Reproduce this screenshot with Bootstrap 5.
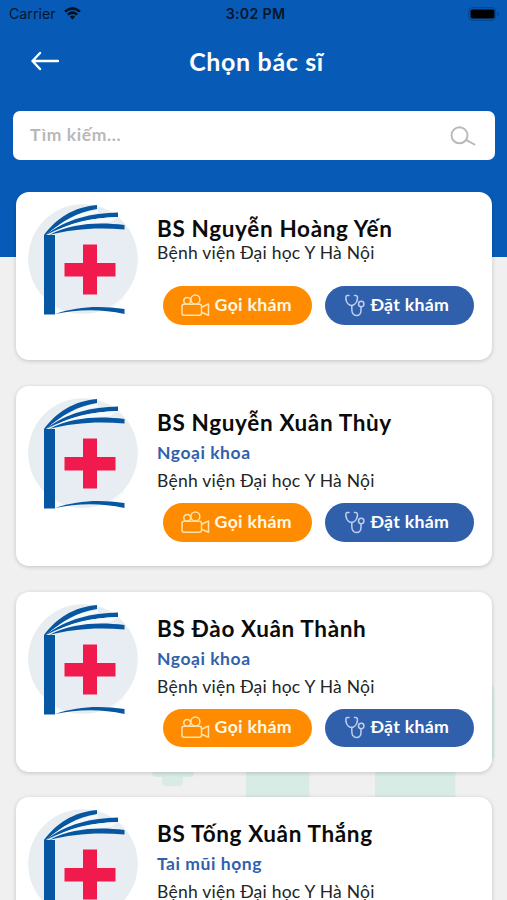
<!DOCTYPE html>
<html lang="vi">
<head>
<meta charset="utf-8">
<meta name="viewport" content="width=device-width, initial-scale=1">
<title>Chọn bác sĩ</title>
<link rel="stylesheet" href="https://cdn.jsdelivr.net/npm/bootstrap@5.3.0/dist/css/bootstrap.min.css">
<style>
html, body { height: 900px; overflow: hidden; }
body { background: #f0f0f0; font-family: Lato, "Noto Sans", sans-serif; color: #0b0b0b; }
.app-header { background: #075bb6; height: 257px; }
.status-bar { height: 27px; padding: 0 7px 0 9px; font: 14.2px/27px Inter, sans-serif; color: #04152b; display: grid; grid-template-columns: 1fr auto 1fr; }
.status-bar .clock { font-weight: 600; letter-spacing: .3px; position: relative; left: 1px; }
.title-bar { height: 68px; padding: 0 29px 0 31px; display: grid; grid-template-columns: 28px 1fr 24px; }
.title-bar h1 { font-size: 25px; font-weight: 700; letter-spacing: .65px; padding-bottom: 1px; }
.search-box { height: 49px; margin: 16px 12px 0 13px; padding: 0 19px 0 17px; border-radius: 7px; }
.search-box input { font-size: 17.5px; font-weight: 700; letter-spacing: .6px; padding: 0; color: #b5b5b5; }
.search-box input::placeholder { color: #b8b8b8; opacity: 1; }
.doctor-list { margin-top: -65px; padding: 0 15px 0 16px; height: 708px; overflow: hidden; }
.doctor { border: 0; border-radius: 13px; height: 180px; margin-bottom: 25.5px; box-shadow: 0 1px 4px rgba(0,0,0,.19); }
.doctor-short { height: 168px; margin-bottom: 26px; }
.portrait { width: 141px; padding: 7px 0 0 11px; }
.portrait svg { display: block; }
.doctor-name { font-size: 22.5px; line-height: 25px; font-weight: 700; letter-spacing: .66px; margin: 24px 0 0; white-space: nowrap; }
.specialty { font-size: 17.5px; line-height: 30px; font-weight: 700; letter-spacing: .55px; margin: 3px 0 1px; color: #325fae; }
.hospital { font-size: 17.5px; line-height: 24px; letter-spacing: .24px; color: #242424; white-space: nowrap; }
.actions { margin: 10px 0 0 6px; gap: 13.5px; }
.doctor-short .actions { margin-top: 21px; }
.pill { width: 148.5px; height: 38.5px; padding: 0 2px 0 0; font-size: 17.7px; font-weight: 700; letter-spacing: .3px; color: #fff; border: 0; }
.pill-call { background: #ff8b00; color: #fff8e2; gap: 5px; }
.pill-book { background: #305fac; gap: 5px; padding-right: 4px; }
.backdrop { left: 0; top: 600px; z-index: 0; }
</style>
</head>
<body>
<svg class="d-none" aria-hidden="true">
  <symbol id="book" viewBox="0 0 114 119">
    <circle cx="56" cy="60" r="54.8" fill="#e7edf1"/>
    <path d="M28 36C49 29 72 29 97 31V100L88 108C65 105 48 110 28 114Z" fill="#e9eef3" fill-opacity=".35"/>
    <path d="M17 36H28V115.500H17Z" fill="#0756a2"/>
    <path d="M17 36C29 20 46 8 70 6V10C50 13 34 23 19 36Z" fill="#0756a2"/>
    <path d="M20 35.500C38 20 52 14 71 10.500V14C52 17 36 25 22 35.500Z" fill="#f6f9fb"/>
    <path d="M19 36C39 20 65 14 91 13.500V18C64 19 43 24 19 36Z" fill="#0756a2"/>
    <path d="M27 33.500C41 24 64 19 91 18L84 23C61 24 42 28 27 33.500Z" fill="#f6f9fb"/>
    <path d="M22 36C46 24 71 23 97.500 26V30.500C70 28 45 30 22 36Z" fill="#0756a2"/>
    <path d="M28 115C51 107 74 106.500 97.500 110V115C73 109.500 49 110.500 28 115Z" fill="#0756a2"/>
    <path d="M56 45.500H70V64H88.500V77.500H70V95.500H56V77.500H37.500V64H56Z" fill="#f11a4c"/>
  </symbol>
  <symbol id="camera" viewBox="0 0 29 23">
    <g fill="none" stroke="#ffe3ad" stroke-width="1.5" stroke-linejoin="round">
      <rect x="1" y="10.200" width="19.500" height="11" rx="2"/>
      <circle cx="6.200" cy="6.800" r="3.400"/><circle cx="14.400" cy="5.400" r="4.500"/>
      <path d="M20.500 13.200L27.500 10V21.300L20.500 18.200"/>
    </g>
  </symbol>
  <symbol id="stethoscope" viewBox="0 0 20 23">
    <g fill="none" stroke="#bfd0ef" stroke-width="1.5" stroke-linecap="round">
      <path d="M4 1.500H2.200C.6 1.500.8 4 1 5.500C1.600 9 4 11.500 6.500 11.500S11.600 9 12.300 5.500C12.700 3 12.400 1.500 10.800 1.500H9.500"/>
      <path d="M6.800 11.500V15C6.800 19 8.500 21.500 11.500 21.500S16 19 16 16.500V13"/>
      <circle cx="16.200" cy="10" r="2.700"/>
    </g>
  </symbol>
</svg>

<header class="app-header">
  <div class="status-bar">
    <div class="d-flex align-items-center"><span>Carrier</span>
      <svg class="ms-2" width="17" height="13" viewBox="0 0 17 13" fill="none" stroke="#03101f" stroke-width="2.500"><path d="M1 4.600Q8.500-1.800 16 4.600M3.800 7.600Q8.500 3.700 13.200 7.600"/><path d="M5.800 9.700Q8.500 7.500 11.200 9.700L8.500 12.500Z" fill="#03101f" stroke="none"/></svg>
    </div>
    <span class="clock">3:02 PM</span>
    <div class="d-flex align-items-center justify-content-end">
      <svg width="32" height="14" viewBox="0 0 32 14"><rect x=".7" y=".7" width="27" height="12.600" rx="3.500" fill="none" stroke="#05438a"/><rect x="2.500" y="2.500" width="24" height="9" rx="1.800" fill="#000"/><path d="M29.500 5V9Q31 8.500 31 7T29.500 5Z" fill="#05438a"/></svg>
    </div>
  </div>
  <div class="title-bar align-items-center">
    <svg width="28" height="20" viewBox="0 0 28 20" fill="none" stroke="#fff" stroke-width="2.400" stroke-linecap="round" stroke-linejoin="round"><path d="M27 10H1.500M9 2L1.500 10L9 18"/></svg>
    <h1 class="text-white text-center mb-0">Chọn bác sĩ</h1>
  </div>
  <div class="search-box bg-white d-flex align-items-center">
    <input class="form-control border-0 shadow-none bg-transparent" type="text" placeholder="Tìm kiếm...">
    <svg class="flex-shrink-0" width="26" height="20" viewBox="0 0 26 20" fill="none" stroke="#b8b8b8" stroke-width="1.900" stroke-linecap="round"><circle cx="9.500" cy="9.300" r="8"/><path d="M16 13.800L24.500 18.500"/></svg>
  </div>
</header>

<svg class="backdrop position-absolute" width="507" height="300" viewBox="0 0 507 300" fill="#d9ebe5" aria-hidden="true">
  <path d="M162 140H183V164H191Q194 164 194 168V172Q194 177 190 177H183V182Q183 186 179 186H166Q162 186 162 182V177H156Q152 177 152 172V164H162Z"/>
  <path d="M246 160H309.500V200H246ZM375 160H455.500V200H375ZM440 85H491Q494.500 86 494.500 92V155Q494.500 160 490 160H440Z"/>
</svg>

<main class="doctor-list position-relative">
  <article class="card doctor doctor-short flex-row">
    <div class="portrait flex-shrink-0"><svg width="114" height="119"><use href="#book"/></svg></div>
    <div>
      <h2 class="doctor-name">BS Nguyễn Hoàng Yến</h2>
      <div class="hospital">Bệnh viện Đại học Y Hà Nội</div>
      <div class="actions d-flex">
        <button class="btn pill pill-call rounded-pill d-flex align-items-center justify-content-center"><svg width="29" height="23"><use href="#camera"/></svg><span>Gọi khám</span></button>
        <button class="btn pill pill-book rounded-pill d-flex align-items-center justify-content-center"><svg width="20" height="23"><use href="#stethoscope"/></svg><span>Đặt khám</span></button>
      </div>
    </div>
  </article>
  <article class="card doctor flex-row">
    <div class="portrait flex-shrink-0"><svg width="114" height="119"><use href="#book"/></svg></div>
    <div>
      <h2 class="doctor-name">BS Nguyễn Xuân Thùy</h2>
      <div class="specialty">Ngoại khoa</div>
      <div class="hospital">Bệnh viện Đại học Y Hà Nội</div>
      <div class="actions d-flex">
        <button class="btn pill pill-call rounded-pill d-flex align-items-center justify-content-center"><svg width="29" height="23"><use href="#camera"/></svg><span>Gọi khám</span></button>
        <button class="btn pill pill-book rounded-pill d-flex align-items-center justify-content-center"><svg width="20" height="23"><use href="#stethoscope"/></svg><span>Đặt khám</span></button>
      </div>
    </div>
  </article>
  <article class="card doctor flex-row">
    <div class="portrait flex-shrink-0"><svg width="114" height="119"><use href="#book"/></svg></div>
    <div>
      <h2 class="doctor-name">BS Đào Xuân Thành</h2>
      <div class="specialty">Ngoại khoa</div>
      <div class="hospital">Bệnh viện Đại học Y Hà Nội</div>
      <div class="actions d-flex">
        <button class="btn pill pill-call rounded-pill d-flex align-items-center justify-content-center"><svg width="29" height="23"><use href="#camera"/></svg><span>Gọi khám</span></button>
        <button class="btn pill pill-book rounded-pill d-flex align-items-center justify-content-center"><svg width="20" height="23"><use href="#stethoscope"/></svg><span>Đặt khám</span></button>
      </div>
    </div>
  </article>
  <article class="card doctor flex-row">
    <div class="portrait flex-shrink-0"><svg width="114" height="119"><use href="#book"/></svg></div>
    <div>
      <h2 class="doctor-name">BS Tống Xuân Thắng</h2>
      <div class="specialty">Tai mũi họng</div>
      <div class="hospital">Bệnh viện Đại học Y Hà Nội</div>
    </div>
  </article>
</main>
<script src="https://cdn.jsdelivr.net/npm/bootstrap@5.3.0/dist/js/bootstrap.bundle.min.js"></script>
</body>
</html>
